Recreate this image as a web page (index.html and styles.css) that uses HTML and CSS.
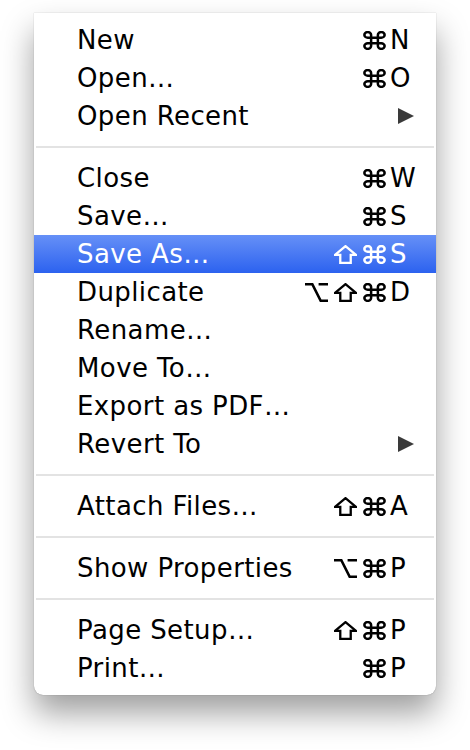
FILE: index.html
```html
<!DOCTYPE html>
<html>
<head>
<meta charset="utf-8">
<link rel="stylesheet" href="styles.css">
</head>
<body>
<svg class="defs" width="0" height="0" aria-hidden="true">
  <defs>
    <symbol id="cmd" viewBox="1.8 1.8 20.4 20.4" preserveAspectRatio="none"><path d="M9 9V6A3 3 0 1 0 6 9H18A3 3 0 1 0 15 6V18A3 3 0 1 0 18 15H6A3 3 0 1 0 9 18Z" fill="none" stroke="currentColor" stroke-width="2.5" vector-effect="non-scaling-stroke"/></symbol>
    <symbol id="shift" viewBox="1 1.2 22 21.6" preserveAspectRatio="none"><path d="M12 2.5L22 12.5H17V21.5H7V12.5H2Z" fill="none" stroke="currentColor" stroke-width="2.3" stroke-linejoin="miter" vector-effect="non-scaling-stroke"/></symbol>
    <symbol id="opt" viewBox="1 3.3 22 17.9" preserveAspectRatio="none"><path d="M1 4.5H8L16 20H23M14 4.5H23" fill="none" stroke="currentColor" stroke-width="2.6" vector-effect="non-scaling-stroke"/></symbol>
  </defs>
</svg>
<div class="menu">
  <div class="item"><span class="label">New</span><span class="mods"><svg class="ic"><use href="#cmd"/></svg></span><span class="key">N</span></div>
  <div class="item"><span class="label">Open…</span><span class="mods"><svg class="ic"><use href="#cmd"/></svg></span><span class="key">O</span></div>
  <div class="item"><span class="label">Open Recent</span><span class="mods"></span><span class="key"><span class="arrow"></span></span></div>
  <div class="sep"></div>
  <div class="item"><span class="label">Close</span><span class="mods"><svg class="ic"><use href="#cmd"/></svg></span><span class="key">W</span></div>
  <div class="item"><span class="label">Save…</span><span class="mods"><svg class="ic"><use href="#cmd"/></svg></span><span class="key">S</span></div>
  <div class="item selected"><span class="label">Save As…</span><span class="mods"><svg class="ic"><use href="#shift"/></svg><svg class="ic"><use href="#cmd"/></svg></span><span class="key">S</span></div>
  <div class="item"><span class="label">Duplicate</span><span class="mods"><svg class="ic"><use href="#opt"/></svg><svg class="ic"><use href="#shift"/></svg><svg class="ic"><use href="#cmd"/></svg></span><span class="key">D</span></div>
  <div class="item"><span class="label">Rename…</span><span class="mods"></span><span class="key"></span></div>
  <div class="item"><span class="label">Move To…</span><span class="mods"></span><span class="key"></span></div>
  <div class="item"><span class="label">Export as PDF…</span><span class="mods"></span><span class="key"></span></div>
  <div class="item"><span class="label">Revert To</span><span class="mods"></span><span class="key"><span class="arrow"></span></span></div>
  <div class="sep"></div>
  <div class="item"><span class="label">Attach Files…</span><span class="mods"><svg class="ic"><use href="#shift"/></svg><svg class="ic"><use href="#cmd"/></svg></span><span class="key">A</span></div>
  <div class="sep"></div>
  <div class="item"><span class="label">Show Properties</span><span class="mods"><svg class="ic"><use href="#opt"/></svg><svg class="ic"><use href="#cmd"/></svg></span><span class="key">P</span></div>
  <div class="sep"></div>
  <div class="item"><span class="label">Page Setup…</span><span class="mods"><svg class="ic"><use href="#shift"/></svg><svg class="ic"><use href="#cmd"/></svg></span><span class="key">P</span></div>
  <div class="item"><span class="label">Print…</span><span class="mods"><svg class="ic"><use href="#cmd"/></svg></span><span class="key">P</span></div>
</div>
</body>
</html>
```

FILE: styles.css
```css
html, body {
  margin: 0;
  padding: 0;
  background: #ffffff;
}

html {
  height: 100%;
}

body {
  box-sizing: border-box;
  min-height: 750px;
  padding: 13px 0 0 34px;
  font-family: "DejaVu Sans", "Liberation Sans", sans-serif;
  font-size: 26px;
  color: #000;
}

.defs {
  position: absolute;
  width: 0;
  height: 0;
  overflow: hidden;
}

.menu {
  width: 402px;
  padding: 8px 0;
  background: #fff;
  border-radius: 0 0 9px 9px;
  box-shadow: 0 18px 32px rgba(0, 0, 0, 0.38), 0 0 1px rgba(0, 0, 0, 0.45);
}

.item {
  display: grid;
  grid-template-columns: 1fr auto 24px;
  column-gap: 4px;
  align-items: center;
  height: 38px;
  line-height: 38px;
  padding: 0 22px 0 43px;
  white-space: nowrap;
}

.label {
  letter-spacing: 0.4px;
}

.item.selected {
  background: linear-gradient(#6690f7, #2c62ef);
  color: #fff;
}

.mods {
  display: flex;
  justify-content: flex-end;
  align-items: center;
  gap: 6px;
}

.ic {
  display: block;
  width: 23px;
  height: 19px;
  margin-top: 1px;
}

.key {
  text-align: left;
  display: flex;
  align-items: center;
}

.arrow {
  display: block;
  width: 0;
  height: 0;
  margin-left: 8px;
  border-top: 8px solid transparent;
  border-bottom: 8px solid transparent;
  border-left: 16px solid #3a3a3a;
}

.sep {
  height: 2px;
  margin: 11px 2px;
  background: #e3e3e3;
}
```
